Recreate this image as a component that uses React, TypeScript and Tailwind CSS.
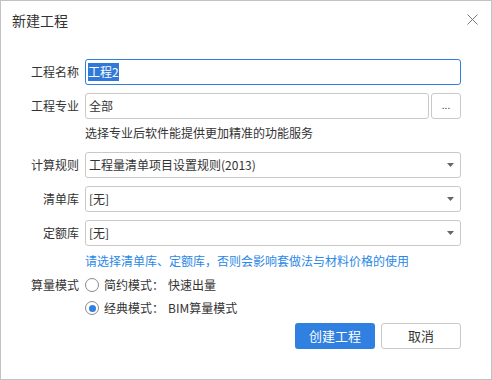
import React from 'react';

const font = { fontFamily: '"Noto Sans CJK SC", "Noto Sans", sans-serif' };

// Small filled down-arrow used by the select boxes
function Caret() {
  return (
    <svg width="7" height="4" viewBox="0 0 7 4" className="shrink-0">
      <path d="M0 0h7L3.5 4z" fill="#666" />
    </svg>
  );
}

function Select({ value }: { value: string }) {
  return (
    <div className="h-[26px] flex items-center justify-between border border-[#c9c9c9] rounded-[3px] pl-[3px] pr-[6px] text-[#333] bg-white">
      <span>{value}</span>
      <Caret />
    </div>
  );
}

function Radio({ checked, label, desc }: { checked?: boolean; label: string; desc: string }) {
  return (
    <div className="flex items-center h-[22px]">
      <span className="w-[14px] h-[14px] rounded-full border border-[#8a8a8a] bg-white flex items-center justify-center">
        {checked && <span className="w-[7px] h-[7px] rounded-full bg-[#2e7fe0]" />}
      </span>
      <span className="ml-[5px] text-[#333]">{label}</span>
      <span className="ml-[4px] text-[#333]">{desc}</span>
    </div>
  );
}

export default function App() {
  return (
    <div
      className="w-[492px] h-[380px] border border-[#c2c2c2] bg-white text-[12px] leading-[20px]"
      style={font}
    >
      {/* Title bar */}
      <div className="h-[37px] flex items-center justify-between pl-[11px] pr-[13px]">
        <span className="text-[14px] text-[#333]">新建工程</span>
        <svg width="11" height="11" viewBox="0 0 11 11">
          <path d="M0.5 0.5l10 10M10.5 0.5l-10 10" stroke="#777" strokeWidth="1" />
        </svg>
      </div>

      {/* Form */}
      <div className="mt-[21px] grid grid-cols-[78px_1fr] gap-x-[6px] pr-[30px]">
        <div className="h-[26px] flex items-center justify-end text-[#333]">工程名称</div>
        <div className="h-[26px] flex items-center border border-[#2f7fe0] rounded-[3px] pl-[2px] bg-white">
          <span className="bg-[#3079d9] text-white leading-[18px]">工程2</span>
        </div>

        <div className="mt-[8px] h-[26px] flex items-center justify-end text-[#333]">工程专业</div>
        <div className="mt-[8px] h-[26px] flex gap-[2px]">
          <div className="flex-1 flex items-center border border-[#c9c9c9] rounded-[3px] pl-[3px] text-[#333]">全部</div>
          <div className="w-[30px] flex items-center justify-center border border-[#c9c9c9] rounded-[3px] text-[#333] text-[10px] leading-none pb-[2px]">...</div>
        </div>

        <div />
        <div className="pt-[4px] text-[#333]">选择专业后软件能提供更加精准的功能服务</div>

        <div className="mt-[9px] h-[26px] flex items-center justify-end text-[#333]">计算规则</div>
        <div className="mt-[9px]">
          <Select value="工程量清单项目设置规则(2013)" />
        </div>

        <div className="mt-[8px] h-[26px] flex items-center justify-end text-[#333]">清单库</div>
        <div className="mt-[8px]">
          <Select value="[无]" />
        </div>

        <div className="mt-[8px] h-[26px] flex items-center justify-end text-[#333]">定额库</div>
        <div className="mt-[8px]">
          <Select value="[无]" />
        </div>

        <div />
        <div className="mt-[5px] text-[#2a88e6]">请选择清单库、定额库，否则会影响套做法与材料价格的使用</div>

        <div className="mt-[3px] h-[22px] flex items-center justify-end text-[#333]">算量模式</div>
        <div className="mt-[3px]">
          <Radio label="简约模式：" desc="快速出量" />
        </div>

        <div />
        <div className="mt-[1px]">
          <Radio checked label="经典模式：" desc="BIM算量模式" />
        </div>
      </div>

      {/* Actions */}
      <div className="mt-[4px] flex justify-end gap-[6px] pr-[30px]">
        <button className="w-[80px] h-[26px] rounded-[3px] bg-[#2f80e0] text-white text-[13px]">创建工程</button>
        <button className="w-[80px] h-[26px] rounded-[3px] border border-[#c9c9c9] bg-white text-[#333] text-[13px]">取消</button>
      </div>
    </div>
  );
}
